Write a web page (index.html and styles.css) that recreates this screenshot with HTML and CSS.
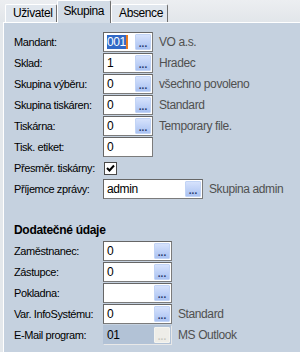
FILE: index.html
```html
<!DOCTYPE html>
<html lang="cs">
<head>
    <meta charset="UTF-8">
    <title>Skupina</title>
    <link rel="stylesheet" href="styles.css">
</head>
<body>

    <!-- Tabs -->
    <div class="tabs">
        <div class="tab">Uživatel</div>
        <div class="tab active">Skupina</div>
        <div class="tab">Absence</div>
    </div>

    <div class="panel">
        <div class="rows">
            <div class="row">
                <span class="label">Mandant:</span>
                <span class="field sm"><span class="value"><span class="sel">001</span><span class="caret"></span></span><span class="pick">...</span></span>
                <span class="info">VO a.s.</span>
            </div>
            <div class="row">
                <span class="label">Sklad:</span>
                <span class="field sm"><span class="value">1</span><span class="pick">...</span></span>
                <span class="info">Hradec</span>
            </div>
            <div class="row">
                <span class="label">Skupina výběru:</span>
                <span class="field sm"><span class="value">0</span><span class="pick">...</span></span>
                <span class="info">všechno povoleno</span>
            </div>
            <div class="row">
                <span class="label">Skupina tiskáren:</span>
                <span class="field sm"><span class="value">0</span><span class="pick">...</span></span>
                <span class="info">Standard</span>
            </div>
            <div class="row">
                <span class="label">Tiskárna:</span>
                <span class="field sm"><span class="value">0</span><span class="pick">...</span></span>
                <span class="info">Temporary file.</span>
            </div>
            <div class="row">
                <span class="label">Tisk. etiket:</span>
                <span class="field sm"><span class="value">0</span></span>
            </div>
            <div class="row">
                <span class="label">Přesměr. tiskárny:</span>
                <span class="check">
                    <svg width="11" height="11" viewBox="0 0 11 11"><path d="M2 5 L4.5 7.5 L9 2.5" fill="none" stroke="#000" stroke-width="2"/></svg>
                </span>
            </div>
            <div class="row">
                <span class="label">Příjemce zprávy:</span>
                <span class="field lg"><span class="value">admin</span><span class="pick">...</span></span>
                <span class="info">Skupina admin</span>
            </div>
        </div>

        <h2 class="section">Dodatečné údaje</h2>

        <div class="rows">
            <div class="row">
                <span class="label">Zaměstnanec:</span>
                <span class="field md"><span class="value">0</span><span class="pick">...</span></span>
            </div>
            <div class="row">
                <span class="label">Zástupce:</span>
                <span class="field md"><span class="value">0</span><span class="pick">...</span></span>
            </div>
            <div class="row">
                <span class="label">Pokladna:</span>
                <span class="field md"><span class="value"></span><span class="pick">...</span></span>
            </div>
            <div class="row">
                <span class="label">Var. InfoSystému:</span>
                <span class="field md"><span class="value">0</span><span class="pick">...</span></span>
                <span class="info">Standard</span>
            </div>
            <div class="row">
                <span class="label">E-Mail program:</span>
                <span class="field md disabled"><span class="value">01</span><span class="pick">...</span></span>
                <span class="info">MS Outlook</span>
            </div>
        </div>
    </div>

</body>
</html>
```

FILE: styles.css
```css
body {
    margin: 0;
    font-family: "Liberation Sans", Arial, sans-serif;
    font-size: 11px;
    letter-spacing: -0.4px;
    color: #000;
    background: #e4e8ec;
    height: 352px;
    overflow: hidden;
}

/* Tabs */
.tabs {
    display: flex;
    align-items: flex-end;
    height: 22px;
    padding-left: 5px;
    background: linear-gradient(#eceef1, #e2e6ea);
}

.tab {
    height: 17px;
    line-height: 17px;
    padding: 0 4px 0 7px;
    font-size: 12px;
    background: #e1e7ee;
    border-top: 1px solid #fff;
    border-left: 1px solid #fff;
    border-right: 1px solid #6f6f6f;
    border-radius: 2px 2px 0 0;
}

.tab.active {
    position: relative;
    height: 22px;
    line-height: 20px;
    margin-bottom: -1px;
    padding: 0 6px 0 5px;
    background: #d3dce6;
    z-index: 1;
}

/* Panel */
.panel {
    margin-left: 3px;
    padding: 9px 0 0 10px;
    height: 320px;
    overflow: hidden;
    background: #c5d1df;
    border-top: 1px solid #fff;
    border-left: 1px solid #fff;
}

.rows {
    display: flex;
    flex-direction: column;
    gap: 1px;
}

.row {
    display: flex;
    align-items: center;
    height: 20px;
}

.label {
    width: 89px;
    flex-shrink: 0;
}

.field {
    display: flex;
    align-items: stretch;
    height: 20px;
    box-sizing: border-box;
    background: #fff;
    border: 1px solid #7b7b7b;
    border-top-color: #666;
    border-left-color: #666;
}

.field.sm { width: 50px; }
.field.md { width: 69px; }
.field.lg { width: 100px; }

.field.disabled {
    background: #b2c2d6;
    border-color: #e8e8e8;
    border-left-color: #b2c2d6;
    border-top-color: #b2c2d6;
}

.value {
    flex: 1;
    display: flex;
    align-items: center;
    padding-left: 3px;
    font-size: 12px;
}

.sel {
    background: #3169c6;
    color: #fff;
    line-height: 14px;
}

.caret {
    width: 2px;
    height: 14px;
    background: #e87a1e;
}

.pick {
    width: 14px;
    margin: 1px 1px 1px 0;
    display: flex;
    align-items: flex-end;
    justify-content: center;
    font-size: 10px;
    font-weight: bold;
    letter-spacing: 0;
    line-height: 11px;
    color: #2a3a6a;
    background: linear-gradient(#d6e2fc, #aac2f2);
    border: 1px solid #c2d4f6;
    border-radius: 1px;
}

.disabled .pick {
    color: #c8c8c0;
    background: #eeede8;
    border-color: #f4f4f0;
}

.info {
    margin-left: 6px;
    color: #505050;
    font-size: 12px;
}

.check {
    width: 13px;
    height: 13px;
    margin-left: 1px;
    box-sizing: border-box;
    display: flex;
    align-items: center;
    justify-content: center;
    background: #fff;
    border: 1px solid #4a4a4a;
}

.section {
    margin: 21px 0 0;
    height: 21px;
    line-height: 21px;
    font-size: 12px;
    letter-spacing: -0.3px;
    font-weight: bold;
}
```
